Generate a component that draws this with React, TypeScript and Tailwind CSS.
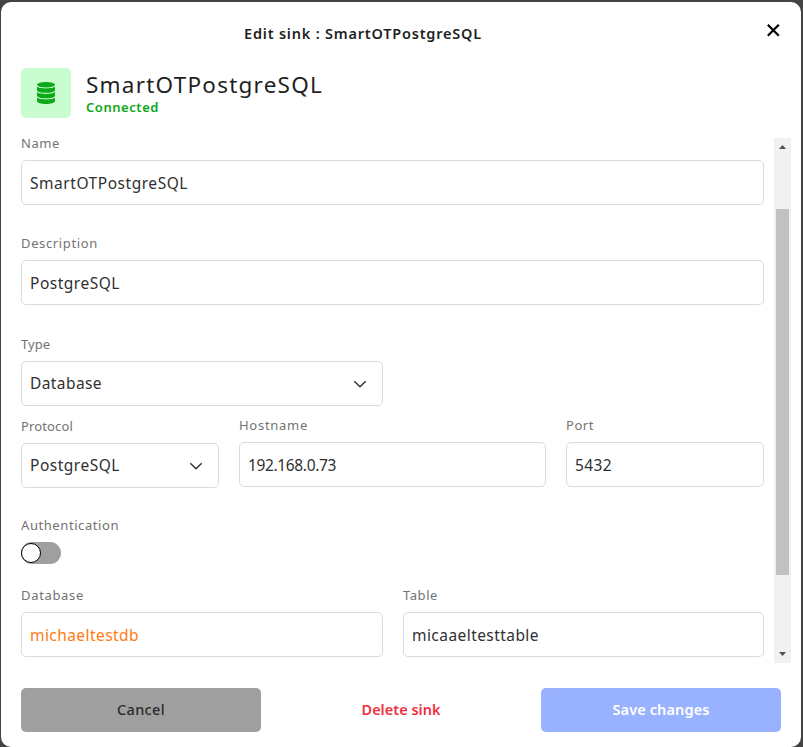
import React from "react";

const inputBox =
  "flex h-[45px] items-center rounded-[5px] border border-[#dbdbdb] bg-white px-2 text-[#303030]";

function Txt({ w, className, children }: { w: number; className: string; children: string }) {
  const ref = React.useRef<HTMLSpanElement>(null);
  const [gap, setGap] = React.useState(0);
  React.useLayoutEffect(() => {
    if (ref.current) {
      const width = ref.current.getBoundingClientRect().width;
      setGap((w - width) / children.length);
    }
  }, []);
  return (
    <span ref={ref} className={"whitespace-nowrap " + className} style={{ letterSpacing: gap + "px" }}>
      {children}
    </span>
  );
}

function Field({
  label, lw, value, vw, select, className = "", tone = "",
}: {
  label: string; lw: number; value: string; vw: number; select?: boolean; className?: string; tone?: string;
}) {
  return (
    <div className={"flex flex-col gap-2.5 " + className}>
      <label className="flex h-3 items-center pb-0.5 text-[13px] leading-3 text-[#737373]">
        <Txt w={lw} className="">{label}</Txt>
      </label>
      <div className={inputBox}>
        <Txt w={vw} className={"text-[15.5px] leading-5 " + (select ? "pb-px " : "pt-px ") + tone}>{value}</Txt>
        {select && (
          <svg className="mr-1.5 ml-auto h-4 w-4" viewBox="0 0 16 16" fill="none" stroke="#333" strokeWidth="1.5">
            <path d="M2.3 5.2 8 10.700l5.7-5.5" />
          </svg>
        )}
      </div>
    </div>
  );
}

export default function App() {
  return (
    <div className="h-[747px] w-[803px] bg-[#444] pt-0.5 pr-0.5 pl-px font-['Noto_Sans',sans-serif]">
      <div className="flex h-[745px] flex-col rounded-[10px] bg-white">
        <header className="flex h-[66px] justify-between pl-[243px]">
          <h1 className="mt-[21px] text-[14.5px] leading-5 font-semibold text-[#1f1f1f]">
            <Txt w={238} className="">Edit sink : SmartOTPostgreSQL</Txt>
          </h1>
          <button className="mt-[21px] mr-5 h-[15px] w-[15px]" aria-label="Close">
            <svg viewBox="0 0 15 15" fill="none" stroke="#000" strokeWidth="2.2">
              <path d="m1.800 1.800 11 11M12.800 1.800l-11 11" />
            </svg>
          </button>
        </header>
        <section className="flex h-[70px] gap-[15px] pl-5">
          <div className="flex h-[50px] w-[50px] items-center justify-center rounded-[5px] bg-[#c9fccf]">
            <svg className="h-[22px] w-[18px]" viewBox="0 0 18 22" fill="#0ca919">
              <ellipse cx="9" cy="2.800" rx="9" ry="2.800" />
              <path d="M0 4.500c2 2.500 16 2.500 18 0V8c0 3.800-18 3.800-18 0zM0 10c2 2.500 16 2.500 18 0v3.500c0 3.800-18 3.800-18 0zM0 15.500c2 2.500 16 2.500 18 0V19c0 4-18 4-18 0z" />
            </svg>
          </div>
          <div className="flex flex-col">
            <Txt w={237} className="mt-px self-start text-[22.5px] leading-[31px] text-[#1f1f1f]">SmartOTPostgreSQL</Txt>
            <Txt w={73} className="self-start text-[13px] leading-[14px] font-semibold text-[#0ca919]">Connected</Txt>
          </div>
        </section>
        <main className="flex h-[525px] justify-between pr-2.5 pl-5">
          <div className="w-[743px]">
            <Field label="Name" lw={39} value="SmartOTPostgreSQL" vw={158} />
            <Field className="mt-[33px]" label="Description" lw={77} value="PostgreSQL" vw={90} />
            <Field className="mt-[34px] w-[362px]" label="Type" lw={29} value="Database" vw={72} select />
            <div className="mt-3.5 flex items-start gap-5">
              <Field className="mt-px w-[198px]" label="Protocol" lw={52} value="PostgreSQL" vw={90} select />
              <Field className="w-[307px]" label="Hostname" lw={69} value="192.168.0.73" vw={88} />
              <Field className="w-[198px]" label="Port" lw={28} value="5432" vw={37} />
            </div>
            <div className="mt-8 flex h-3 items-center text-[13px] text-[#737373]">
              <Txt w={98} className="">Authentication</Txt>
            </div>
            <div className="mt-2.5 flex h-[22px] w-10 items-center rounded-full bg-[#9f9f9f]">
              <div className="h-5 w-5 rounded-full border border-black bg-white" />
            </div>
            <div className="mt-[26px] flex gap-5">
              <Field className="w-[362px]" label="Database" lw={63} value="michaeltestdb" vw={109} tone="text-[#ff7b0f]" />
              <Field className="w-[361px]" label="Table" lw={35} value="micaaeltesttable" vw={127} />
            </div>
          </div>
          <div className="flex w-[17px] flex-col items-center bg-[#f1f1f1]">
            <svg className="h-[17px] w-[17px] shrink-0" viewBox="0 0 17 17" fill="#505050">
              <path d="M5 11h7L8.500 7z" />
            </svg>
            <div className="mt-[54px] h-[366px] w-[13px] bg-[#c1c1c1]" />
            <svg className="mt-auto h-[17px] w-[17px] shrink-0" viewBox="0 0 17 17" fill="#505050">
              <path d="M5 6h7l-3.500 4z" />
            </svg>
          </div>
        </main>
        <footer className="mt-[25px] flex gap-5 pl-5 text-[14.5px] font-semibold">
          <button className="h-11 w-60 rounded-[5px] bg-[#9f9f9f] font-medium text-[#2b2b2b]">
            <Txt w={48} className="">Cancel</Txt>
          </button>
          <button className="h-11 w-60 text-[#f03040]">
            <Txt w={79} className="">Delete sink</Txt>
          </button>
          <button className="h-11 w-60 rounded-[5px] bg-[#99b2ff] text-white">
            <Txt w={97} className="">Save changes</Txt>
          </button>
        </footer>
      </div>
    </div>
  );
}
